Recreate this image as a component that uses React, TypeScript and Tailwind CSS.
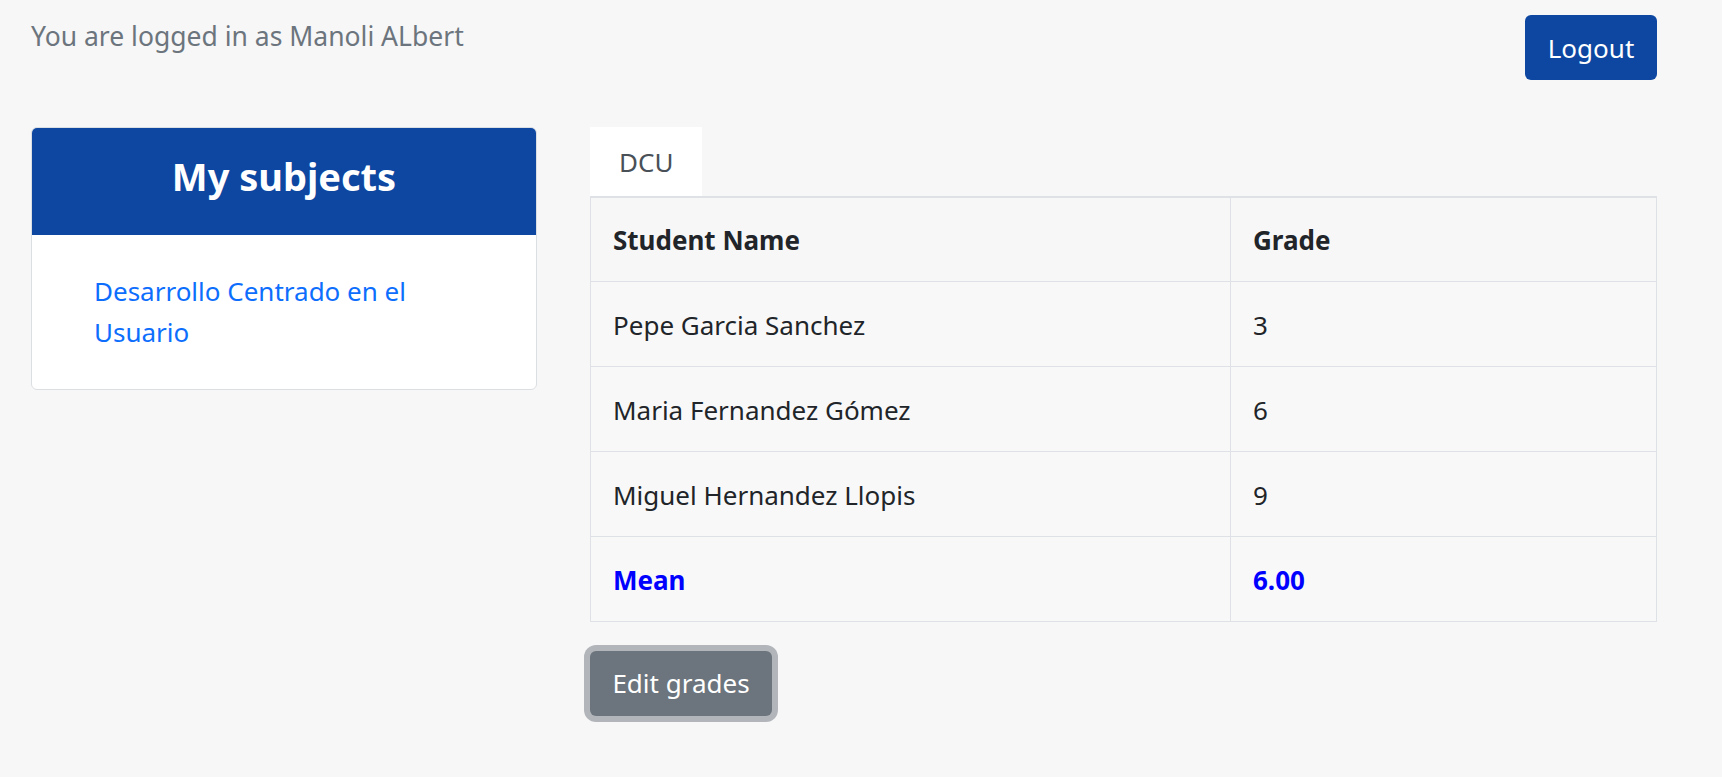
import React from 'react';

const students = [
  { name: 'Pepe Garcia Sanchez', grade: 3 },
  { name: 'Maria Fernandez Gómez', grade: 6 },
  { name: 'Miguel Hernandez Llopis', grade: 9 },
];

export default function App() {
  const mean = students.reduce((s, x) => s + x.grade, 0) / students.length;

  return (
    <div className="min-h-screen bg-[#f7f7f7] pl-[31px] pt-[15px] font-['Noto_Sans',sans-serif] text-[26px] leading-[42px] text-[#212529]">
      <div className="w-[1626px]">
        {/* top bar */}
        <div className="flex items-start justify-between">
          <p className="text-[26.5px] text-[#6c757d]">You are logged in as Manoli ALbert</p>
          <button className="h-[65px] w-[132px] rounded-[6px] bg-[#0d47a1] text-white">Logout</button>
        </div>

        <div className="mt-[47px] flex items-start gap-[53px]">
          {/* subjects card */}
          <div className="w-[506px] overflow-hidden rounded-[6px] border border-[#dcdfe2] bg-white">
            <div className="h-[107px] bg-[#0d47a1] pt-[23px] text-center">
              <h2 className="text-[38px] font-bold leading-[50px] text-white">My subjects</h2>
            </div>
            <div className="py-[36px] pl-[62px] pr-[80px]">
              <a href="#" className="block leading-[41px] text-[#0d6efd]">
                Desarrollo Centrado en el Usuario
              </a>
            </div>
          </div>

          {/* grades */}
          <div className="flex-1">
            <div className="flex">
              <div className="flex h-[69px] w-[112px] items-center bg-white pl-[29px] text-[#495057]">DCU</div>
            </div>
            <table className="w-full border-collapse border-t-2 border-[#dee2e6] bg-[#f8f8f8]">
              <thead>
                <tr className="h-[84px] bg-[#f7f7f7]">
                  <th className="w-[640px] border border-[#dee2e6] px-[22px] pt-[2px] text-left font-bold">Student Name</th>
                  <th className="border border-[#dee2e6] px-[22px] pt-[2px] text-left font-bold">Grade</th>
                </tr>
              </thead>
              <tbody>
                {students.map((s) => (
                  <tr key={s.name} className="h-[85px]">
                    <td className="border border-[#dee2e6] px-[22px] pt-[2px]">{s.name}</td>
                    <td className="border border-[#dee2e6] px-[22px] pt-[2px]">{s.grade}</td>
                  </tr>
                ))}
                <tr className="h-[85px] font-bold text-[#0000ff]">
                  <td className="border border-[#dee2e6] px-[22px] pt-[2px]">Mean</td>
                  <td className="border border-[#dee2e6] px-[22px] pt-[2px]">{mean.toFixed(2)}</td>
                </tr>
              </tbody>
            </table>
            <div className="mt-[29px]">
              <button className="h-[65px] w-[182px] rounded-[6px] bg-[#6c757d] text-white ring-[6px] ring-[#b2b6ba]">
                Edit grades
              </button>
            </div>
          </div>
        </div>
      </div>
    </div>
  );
}
